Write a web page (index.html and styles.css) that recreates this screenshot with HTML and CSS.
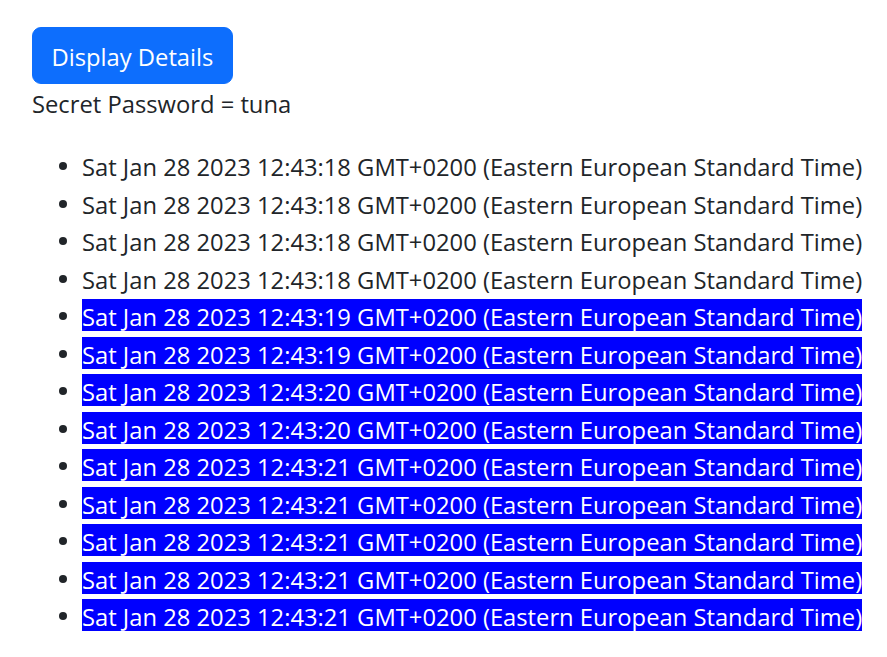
FILE: index.html
```html
<!DOCTYPE html>
<html lang="en">
<head>
<meta charset="utf-8">
<title>Details</title>
<link rel="stylesheet" href="styles.css">
</head>
<body>
<div class="app">
  <button class="btn" type="button">Display Details</button>
  <p class="secret">Secret Password = tuna</p>
  <ul class="log">
    <li><span class="stamp">Sat Jan 28 2023 12:43:18 GMT+0200 (Eastern European Standard Time)</span></li>
    <li><span class="stamp">Sat Jan 28 2023 12:43:18 GMT+0200 (Eastern European Standard Time)</span></li>
    <li><span class="stamp">Sat Jan 28 2023 12:43:18 GMT+0200 (Eastern European Standard Time)</span></li>
    <li><span class="stamp">Sat Jan 28 2023 12:43:18 GMT+0200 (Eastern European Standard Time)</span></li>
    <li class="hl"><span class="stamp">Sat Jan 28 2023 12:43:19 GMT+0200 (Eastern European Standard Time)</span></li>
    <li class="hl"><span class="stamp">Sat Jan 28 2023 12:43:19 GMT+0200 (Eastern European Standard Time)</span></li>
    <li class="hl"><span class="stamp">Sat Jan 28 2023 12:43:20 GMT+0200 (Eastern European Standard Time)</span></li>
    <li class="hl"><span class="stamp">Sat Jan 28 2023 12:43:20 GMT+0200 (Eastern European Standard Time)</span></li>
    <li class="hl"><span class="stamp">Sat Jan 28 2023 12:43:21 GMT+0200 (Eastern European Standard Time)</span></li>
    <li class="hl"><span class="stamp">Sat Jan 28 2023 12:43:21 GMT+0200 (Eastern European Standard Time)</span></li>
    <li class="hl"><span class="stamp">Sat Jan 28 2023 12:43:21 GMT+0200 (Eastern European Standard Time)</span></li>
    <li class="hl"><span class="stamp">Sat Jan 28 2023 12:43:21 GMT+0200 (Eastern European Standard Time)</span></li>
    <li class="hl"><span class="stamp">Sat Jan 28 2023 12:43:21 GMT+0200 (Eastern European Standard Time)</span></li>
  </ul>
</div>
</body>
</html>
```
FILE: styles.css
```css
html, body {
  margin: 0;
  padding: 0;
  background: #fff;
}
body {
  font-family: "Open Sans", "Noto Sans", sans-serif;
  font-size: 23.75px;
  line-height: 37.5px;
  color: #212529;
}
.app {
  padding: 27px 0 0 32px;
}
.btn {
  display: block;
  font: inherit;
  line-height: 37.5px;
  color: #fff;
  background: #0d6efd;
  border: 1px solid #0d6efd;
  border-radius: 9px;
  padding: 10.75px 18.5px 6.75px;
  margin: 0;
  cursor: pointer;
}
.secret {
  margin: 0 0 23.5px;
  padding-top: 2px;
}
.log {
  margin: 0;
  padding-left: 50px;
  white-space: nowrap;
}
.stamp {
  display: inline-block;
  line-height: 28px;
  padding-top: 4px;
  vertical-align: -2px;
}
.hl .stamp {
  background: #0000ff;
  color: #fff;
}
```
